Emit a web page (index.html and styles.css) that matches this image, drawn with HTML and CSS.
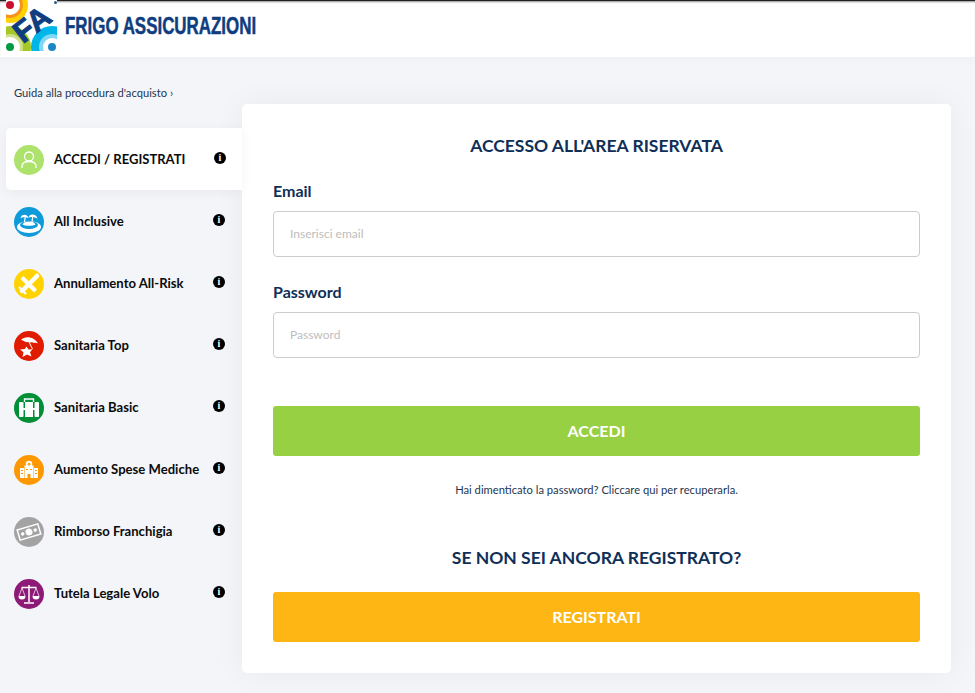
FILE: index.html
```html
<!DOCTYPE html>
<html lang="it">

<head>
    <meta charset="UTF-8">
    <meta name="viewport" content="width=device-width, initial-scale=1.0">
    <title>Frigo Assicurazioni</title>
    <link rel="stylesheet" href="styles.css">
</head>

<body>
    <div class="header">
        <svg class="logo" viewBox="0 0 51 51" width="51" height="51">
            <rect width="51" height="51" fill="#fff"/>
            <circle cx="4" cy="5" r="18" fill="#ffd200"/>
            <circle cx="4" cy="5" r="13" fill="#f7941d"/>
            <circle cx="4" cy="5" r="10" fill="#fff"/>
            <circle cx="4" cy="5" r="4" fill="#c8102e"/>
            <circle cx="4" cy="47" r="21" fill="#a5c826"/>
            <circle cx="4" cy="47" r="13" fill="#cfe08a"/>
            <circle cx="4" cy="47" r="10" fill="#fff"/>
            <circle cx="4" cy="47" r="4" fill="#009a44"/>
            <circle cx="46" cy="47" r="21" fill="#00b5e8"/>
            <circle cx="46" cy="47" r="13" fill="#7fd8f3"/>
            <circle cx="46" cy="47" r="9" fill="#fff"/>
            <circle cx="46" cy="47" r="4" fill="#1b87c9"/>
            <text class="logo-mark" transform="translate(17 44) rotate(-38)">FA</text>
        </svg>
        <span class="brand">FRIGO ASSICURAZIONI</span>
        <span class="dot"></span>
    </div>

    <div class="page">
        <div class="sidebar">
            <a class="guide" href="#">Guida alla procedura d'acquisto ›</a>
            <ul class="menu">
                <li class="menu-item active">
                    <span class="bullet green-light">
                        <svg viewBox="0 0 30 30"><circle cx="15" cy="11.500" r="4.500" fill="none" stroke="#fff" stroke-width="1.300"/><path d="M8 23v-1.500c0-3 2.500-5 7-5s7 2 7 5V23" fill="none" stroke="#fff" stroke-width="1.300"/></svg>
                    </span>
                    <span class="menu-label">ACCEDI / REGISTRATI</span>
                    <span class="info">i</span>
                </li>
                <li class="menu-item">
                    <span class="bullet blue">
                        <svg viewBox="0 0 30 30"><ellipse cx="15" cy="20" rx="12" ry="6" fill="#fff"/><ellipse cx="15" cy="18" rx="9" ry="4" fill="#0f9ad9"/><path d="M8.500 17.500c1-4 12-4 13 0-2 1.800-11 1.800-13 0Z" fill="#fff"/><path d="M10.500 15l.8-5.500M18 15l.7-5.500" stroke="#fff" stroke-width="1.200"/><path d="M6.500 11c1-4.500 7-4 8 0-2-1-6-1-8 0ZM14.500 10.500c1-4.500 8-4 9 1-2-1.500-7-2-9-1Z" fill="#fff"/></svg>
                    </span>
                    <span class="menu-label">All Inclusive</span>
                    <span class="info">i</span>
                </li>
                <li class="menu-item">
                    <span class="bullet yellow">
                        <svg viewBox="0 0 30 30"><path d="M8 22L23 7" stroke="#fff" stroke-width="4.500" stroke-linecap="round"/><path d="M8 8.500l13.500 13.500" stroke="#fff" stroke-width="4"/><path d="M5 18l7 7" stroke="#fff" stroke-width="2.200"/></svg>
                    </span>
                    <span class="menu-label">Annullamento All-Risk</span>
                    <span class="info">i</span>
                </li>
                <li class="menu-item">
                    <span class="bullet red">
                        <svg viewBox="0 0 30 30"><path d="M7 9c4-4.500 13-3.500 17 3.500-1-.3-2.500-1-4-.5-.8-.8-2.500-1.200-3.500-.5-1-.6-3-.9-4-.2C11 10.800 8.500 9 7 9Z" fill="#fff"/><path d="M15 11l3.500 7" stroke="#fff" stroke-width="1"/><path d="M12.500 15.500l2 3 4-.2-2.500 3 1.500 4.200-4.500-2-4.500 2.500 1-4.800-3.500-2.700 4.800-.5Z" fill="#fff"/></svg>
                    </span>
                    <span class="menu-label">Sanitaria Top</span>
                    <span class="info">i</span>
                </li>
                <li class="menu-item">
                    <span class="bullet green">
                        <svg viewBox="0 0 30 30"><path d="M10.500 9V6h9v3" fill="none" stroke="#fff" stroke-width="1.400"/><rect x="5" y="9" width="4.500" height="15" rx="1" fill="#fff"/><rect x="11" y="9" width="8" height="15" fill="#fff"/><rect x="20.500" y="9" width="4.500" height="15" rx="1" fill="#fff"/><rect x="9" y="15" width="2.500" height="2" fill="#fff"/><rect x="18.500" y="15" width="2.500" height="2" fill="#fff"/></svg>
                    </span>
                    <span class="menu-label">Sanitaria Basic</span>
                    <span class="info">i</span>
                </li>
                <li class="menu-item">
                    <span class="bullet orange">
                        <svg viewBox="0 0 30 30"><path d="M10.500 10.500h9V23h-9ZM6 13h4v10H6ZM20 13h4v10h-4Z" fill="#fff"/><circle cx="15" cy="9" r="3.200" fill="#fff"/><path d="M14.400 7.500h1.200v1h1v1.200h-1v1h-1.200v-1h-1V8.500h1Z" fill="#ff9800"/><path d="M13.500 19h3v4h-3ZM7 15h2v1H7ZM7 18h2v1H7ZM21 15h2v1h-2ZM21 18h2v1h-2ZM12 14h2v1h-2ZM16 14h2v1h-2Z" fill="#ff9800"/></svg>
                    </span>
                    <span class="menu-label">Aumento Spese Mediche</span>
                    <span class="info">i</span>
                </li>
                <li class="menu-item">
                    <span class="bullet grey">
                        <svg viewBox="0 0 30 30"><g transform="rotate(-17 15 15)"><rect x="3.500" y="9" width="23" height="12" fill="#fff"/><rect x="5" y="10.500" width="20" height="9" fill="#a3a3a3"/><circle cx="15" cy="15" r="3.500" fill="#fff"/><circle cx="8.500" cy="15" r="1.700" fill="#fff"/><circle cx="21.500" cy="15" r="1.700" fill="#fff"/></g></svg>
                    </span>
                    <span class="menu-label">Rimborso Franchigia</span>
                    <span class="info">i</span>
                </li>
                <li class="menu-item">
                    <span class="bullet purple">
                        <svg viewBox="0 0 30 30"><path d="M15 6v17M10 24h10M7.500 8.500h15" stroke="#fff" stroke-width="1.500" fill="none"/><path d="M8 9l-3 8M8 9l3 8M22 9l-3 8M22 9l3 8" stroke="#fff" stroke-width=".7" fill="none"/><path d="M4.500 17h7a3.500 3.500 0 0 1-7 0ZM18.500 17h7a3.500 3.500 0 0 1-7 0Z" fill="#fff"/></svg>
                    </span>
                    <span class="menu-label">Tutela Legale Volo</span>
                    <span class="info">i</span>
                </li>
            </ul>
        </div>

        <div class="card">
            <h2 class="card-title">ACCESSO ALL'AREA RISERVATA</h2>
            <form>
                <div class="form-group">
                    <label for="email">Email</label>
                    <input type="text" id="email" placeholder="Inserisci email">
                </div>
                <div class="form-group">
                    <label for="password">Password</label>
                    <input type="password" id="password" placeholder="Password">
                </div>
                <button type="button" class="btn btn-login">ACCEDI</button>
            </form>
            <p class="forgot">Hai dimenticato la password? Cliccare qui per recuperarla.</p>
            <h2 class="card-title second">SE NON SEI ANCORA REGISTRATO?</h2>
            <button type="button" class="btn btn-register">REGISTRATI</button>
        </div>
    </div>
</body>

</html>
```

FILE: styles.css
```css
body {
    font-family: 'Lato', 'Liberation Sans', sans-serif;
    margin: 0;
    padding: 0;
    height: 693px;
    overflow: hidden;
    background-color: #f4f5f8;
    color: #0f2f57;
}

.header {
    height: 57px;
    box-sizing: border-box;
    background-color: white;
    border-top: 1px solid #222;
    box-shadow: inset 0 2px 2px -1px rgba(0, 0, 0, 0.45), 0 2px 8px rgba(0, 0, 0, 0.03);
    display: flex;
    align-items: flex-start;
    padding-left: 6px;
    position: relative;
}

.logo {
    display: block;
    flex-shrink: 0;
    margin-top: -1px;
}

.logo-mark {
    font-family: 'Liberation Sans', sans-serif;
    font-weight: bold;
    font-size: 30px;
    fill: #0f3d80;
    stroke: #0f3d80;
    stroke-width: 1px;
}

.brand {
    font-family: 'Liberation Sans', sans-serif;
    font-weight: bold;
    font-size: 24px;
    line-height: 24px;
    color: #0f3d80;
    -webkit-text-stroke: 0.5px #0f3d80;
    margin: 13px 0 0 8px;
    white-space: nowrap;
    transform: scaleX(0.705);
    transform-origin: left center;
}

.dot {
    position: absolute;
    left: 54px;
    top: 0;
    width: 3px;
    height: 3px;
    border-radius: 50%;
    background-color: #2f5b93;
}

.page {
    display: flex;
    align-items: flex-start;
}

.sidebar {
    width: 242px;
    flex-shrink: 0;
    padding-left: 6px;
    box-sizing: border-box;
}

.guide {
    display: block;
    margin: 29px 0 0 8px;
    font-size: 11.2px;
    line-height: 14px;
    color: #24364f;
    text-decoration: none;
}

.menu {
    list-style: none;
    margin: 28px 0 0 0;
    padding: 0;
}

.menu-item {
    height: 62px;
    display: flex;
    align-items: center;
    padding: 0 17px 0 8px;
    font-size: 13.1px;
    font-weight: bold;
    color: #0b0b0b;
}

.menu-item.active {
    background-color: white;
    border-radius: 5px 0 0 5px;
    box-shadow: 0 2px 12px rgba(0, 0, 0, 0.05);
    padding-right: 16px;
    font-size: 13px;
    position: relative;
    z-index: 1;
}

.bullet {
    width: 30px;
    height: 30px;
    border-radius: 50%;
    flex-shrink: 0;
    margin: 2px 10px 0 0;
}

.bullet svg {
    display: block;
}

.green-light { background-color: #ade26c; }
.blue { background-color: #0f9ad9; }
.yellow { background-color: #ffd200; }
.red { background-color: #e01b00; }
.green { background-color: #008f36; }
.orange { background-color: #ff9800; }
.grey { background-color: #a3a3a3; }
.purple { background-color: #8e1a78; }

.menu-label {
    flex-grow: 1;
    white-space: nowrap;
}

.info {
    width: 12px;
    height: 12px;
    border-radius: 50%;
    background-color: black;
    color: white;
    font-family: 'Liberation Serif', serif;
    font-size: 10px;
    font-weight: bold;
    line-height: 12px;
    text-align: center;
    flex-shrink: 0;
    margin-bottom: 2px;
}

.card {
    width: 709px;
    height: 569px;
    margin-top: 47px;
    box-sizing: border-box;
    padding: 31px 31px 0 31px;
    background-color: white;
    border-radius: 5px;
    box-shadow: 0 0 30px rgba(0, 0, 0, 0.05);
}

.card-title {
    margin: 0;
    text-align: center;
    font-size: 17.5px;
    line-height: 20px;
    font-weight: bold;
    color: #0f2f57;
    position: relative;
    top: 1px;
}

.card-title.second {
    margin-top: 51px;
    top: 0;
}

.form-group {
    margin-top: 26px;
}

.form-group + .form-group {
    margin-top: 25px;
}

.form-group label {
    display: block;
    margin-bottom: 10px;
    font-size: 16px;
    line-height: 20px;
    font-weight: bold;
}

.form-group input {
    display: block;
    width: 100%;
    height: 46px;
    box-sizing: border-box;
    padding: 0 16px 2px 16px;
    font-family: inherit;
    font-size: 12px;
    background-color: white;
    border: 1px solid #ccc;
    border-radius: 4px;
}

.form-group input::placeholder {
    color: #bdbdbd;
}

.btn {
    display: block;
    width: 100%;
    height: 50px;
    padding: 0 0 2px 0;
    border: none;
    border-radius: 3px;
    color: white;
    font-family: inherit;
    font-size: 16px;
    font-weight: bold;
    cursor: pointer;
}

.btn-login {
    background-color: #97d043;
    margin-top: 48px;
}

.btn-register {
    background-color: #fdb614;
    margin-top: 24px;
}

.forgot {
    margin: 27px 0 0 0;
    text-align: center;
    font-size: 11.2px;
    line-height: 14px;
    color: #24364f;
}
```
